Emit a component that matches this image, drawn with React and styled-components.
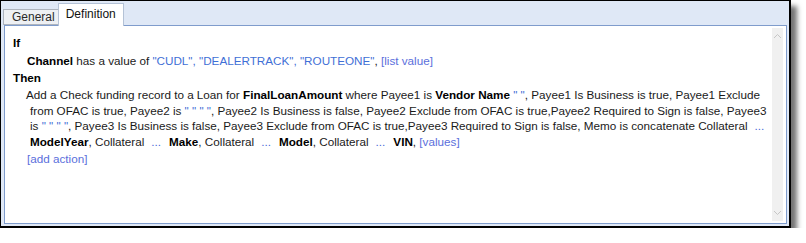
import React from 'react';
import styled, { createGlobalStyle } from 'styled-components';

const GlobalStyle = createGlobalStyle`
  html, body {
    margin: 0;
    padding: 0;
    background: #ffffff;
  }
  body {
    font-family: "Liberation Sans", Arial, sans-serif;
    font-size: 11.7px;
    color: #1a1a1a;
  }
`;

const Frame = styled.div`
  box-sizing: border-box;
  width: 791px;
  height: 228px;
  border-top: 1px solid #000;
  border-left: 1px solid #000;
  border-right: 2px solid #000;
  border-bottom: 2px solid #000;
  background: #dfe8f6;
  box-shadow: 6px 6px 5px rgba(0, 0, 0, 0.55);
  display: flex;
  flex-direction: column;
  padding: 2px 2px 2px 3px;
`;

const TabRow = styled.div`
  display: flex;
  align-items: flex-end;
  height: 22px;
  margin-left: -1px;
  position: relative;
  z-index: 1;
`;

const Tab = styled.div`
  box-sizing: border-box;
  height: ${p => (p.$active ? '23px' : '16px')};
  margin-bottom: ${p => (p.$active ? '-1px' : '0')};
  padding: ${p => (p.$active ? '0 7px 2px 7px' : '0 3px 0 8px')};
  border: 1px solid ${p => (p.$active ? '#b4c2d6' : '#aeb4bd')};
  border-bottom: ${p => (p.$active ? 'none' : '1px solid #aeb4bd')};
  border-right: ${p => (p.$active ? '1px solid #b4c2d6' : 'none')};
  background: ${p => (p.$active ? '#ffffff' : '#eef0f3')};
  color: ${p => (p.$active ? '#111' : '#2a2a2a')};
  display: flex;
  align-items: center;
  font-size: 12px;
`;

const Panel = styled.div`
  flex: 1;
  display: flex;
  background: #ffffff;
  border: 1px solid #7f9ccc;
  min-height: 0;
`;

const Content = styled.div`
  flex: 1;
  padding: 8px 0 0 8px;
`;

const Row = styled.div`
  line-height: 17.5px;
  padding-left: ${p => p.$indent || 0}px;
  white-space: nowrap;
`;

const Para = styled.div`
  padding-left: 13px;
  line-height: 15.5px;
  padding-top: 0.5px;
  padding-bottom: 1px;
`;

const Line = styled.div`
  white-space: pre;
  padding-left: ${p => p.$indent || 0}px;
`;

const B = styled.b`
  font-weight: bold;
  color: #000;
`;

const Val = styled.span`
  color: #3f6fd6;
`;

const Link = styled.span`
  color: #5b6fdc;
`;

const More = styled.span`
  color: #4a6ad8;
  padding: 0 8px 0 7px;
`;

const ScrollBar = styled.div`
  width: 16px;
  margin: 2px 3px 2px 0;
  background: #f0f0f0;
  display: flex;
  flex-direction: column;
  justify-content: space-between;
  align-items: center;
  padding: 5px 0;
`;

const Chevron = ({ down }) => (
  <svg width="9" height="6" viewBox="0 0 9 6">
    <path
      d={down ? 'M1 1 L4.5 4.5 L8 1' : 'M1 5 L4.5 1.5 L8 5'}
      fill="none"
      stroke="#c6c6c6"
      strokeWidth="1"
    />
  </svg>
);

const App = () => {
  return (
    <>
      <GlobalStyle />
      <Frame>
        <TabRow>
          <Tab>General</Tab>
          <Tab $active>Definition</Tab>
        </TabRow>
        <Panel>
          <Content>
            <Row><B>If</B></Row>
            <Row $indent={14}>
              <B>Channel</B> has a value of <Val>"CUDL", "DEALERTRACK", "ROUTEONE"</Val>, <Link>[list value]</Link>
            </Row>
            <Row><B>Then</B></Row>
            <Para>
              <Line>
                Add a Check funding record to a Loan for <B>FinalLoanAmount</B> where Payee1 is <B>Vendor Name</B> <Val>" "</Val>, Payee1 Is Business is true, Payee1 Exclude
              </Line>
              <Line $indent={4}>
                from OFAC is true, Payee2 is <Val>" " " "</Val>, Payee2 Is Business is false, Payee2 Exclude from OFAC is true,Payee2 Required to Sign is false, Payee3
              </Line>
              <Line $indent={4}>
                is <Val>" " " "</Val>, Payee3 Is Business is false, Payee3 Exclude from OFAC is true,Payee3 Required to Sign is false, Memo is concatenate Collateral<More>...</More>
              </Line>
              <Line $indent={4}>
                <B>ModelYear</B>, Collateral<More>...</More><B>Make</B>, Collateral<More>...</More><B>Model</B>, Collateral<More>...</More><B>VIN</B>, <Link>[values]</Link>
              </Line>
            </Para>
            <Row $indent={14}><Link>[add action]</Link></Row>
          </Content>
          <ScrollBar>
            <Chevron />
            <Chevron down />
          </ScrollBar>
        </Panel>
      </Frame>
    </>
  );
};

export default App;
